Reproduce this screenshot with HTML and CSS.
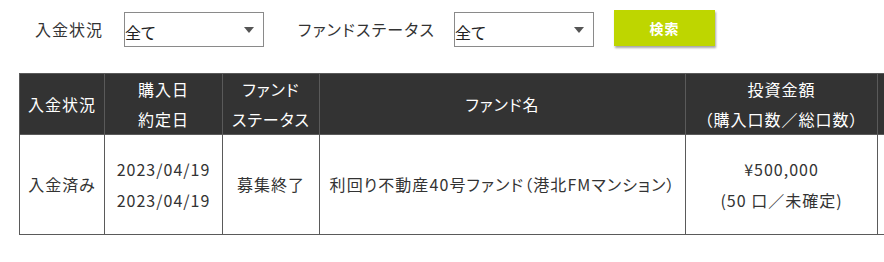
FILE: index.html
```html
<!DOCTYPE html>
<html lang="ja">
<head>
<meta charset="utf-8">
<title>入金状況</title>
<link rel="stylesheet" href="styles.css">
</head>
<body>
<div class="page">
  <div class="filters">
    <span class="label">入金状況</span>
    <div class="select"><span class="value">全て</span><span class="arrow"></span></div>
    <span class="label label-status">ファンドステータス</span>
    <div class="select select-status"><span class="value">全て</span><span class="arrow"></span></div>
    <button class="search" type="button">検索</button>
  </div>
  <div class="table-wrap">
    <table class="list">
      <colgroup>
        <col class="c-pay">
        <col class="c-date">
        <col class="c-status">
        <col class="c-name">
        <col class="c-amount">
        <col class="c-extra">
      </colgroup>
      <thead>
        <tr>
          <th>入金状況</th>
          <th>購入日<br>約定日</th>
          <th>ファンド<br>ステータス</th>
          <th>ファンド名</th>
          <th>投資金額<br>（購入口数／総口数）</th>
          <th></th>
        </tr>
      </thead>
      <tbody>
        <tr>
          <td>入金済み</td>
          <td>2023/04/19<br>2023/04/19</td>
          <td>募集終了</td>
          <td class="name">利回り不動産40号ファンド（港北FMマンション）</td>
          <td>¥500,000<br>(50 口／未確定)</td>
          <td></td>
        </tr>
      </tbody>
    </table>
  </div>
</div>
</body>
</html>
```

FILE: styles.css
```css
html, body {
  margin: 0;
  padding: 0;
  background: #fff;
}

body {
  font-family: "Noto Sans CJK JP", "Noto Sans", sans-serif;
  font-size: 16px;
  color: #333;
  letter-spacing: 1px;
  font-feature-settings: "palt";
  overflow: hidden;
}

.filters {
  display: flex;
  align-items: flex-start;
  padding: 10px 0 0 35px;
  height: 37px;
}

.label {
  align-self: center;
  line-height: 24px;
  color: #333;
}

.select {
  box-sizing: border-box;
  width: 140px;
  height: 35px;
  margin-top: 2px;
  margin-left: 21px;
  border: 1px solid #8a8a8a;
  display: flex;
  align-items: center;
  justify-content: space-between;
  background: #fff;
}

.select .value {
  margin-top: 5px;
  line-height: 20px;
  color: #222;
  letter-spacing: 0;
}

.select .arrow {
  width: 0;
  height: 0;
  margin-right: 9px;
  border-left: 5px solid transparent;
  border-right: 5px solid transparent;
  border-top: 6px solid #555;
}

.label-status {
  margin-left: 34px;
  letter-spacing: 1.2px;
}

.select-status {
  margin-left: 19px;
}

.search {
  box-sizing: border-box;
  width: 101px;
  height: 36px;
  margin-left: 20px;
  border: none;
  background: #bed600;
  color: #fff;
  font-family: "Noto Sans CJK JP", "Noto Sans", sans-serif;
  font-size: 14px;
  font-weight: bold;
  letter-spacing: 1px;
  box-shadow: 1px 2px 2px rgba(0, 0, 0, 0.35);
  padding: 0;
}

.table-wrap {
  margin: 26px 0 0 19px;
  overflow: hidden;
}

.list {
  border-collapse: collapse;
  table-layout: fixed;
  width: 978px;
}

.c-pay { width: 85px; }
.c-date { width: 118px; }
.c-status { width: 97px; }
.c-name { width: 366px; }
.c-amount { width: 192px; }
.c-extra { width: 120px; }

.list th {
  background: #333;
  color: #fff;
  font-weight: normal;
  line-height: 30px;
  height: 60px;
  padding: 0;
  border: 1px solid #5a5a5a;
  text-align: center;
  vertical-align: middle;
}

.list td {
  line-height: 31px;
  height: 99px;
  padding: 0;
  border: 1px solid #5a5a5a;
  text-align: center;
  vertical-align: middle;
  color: #333;
}

.list td.name {
  letter-spacing: 1.1px;
}
```
